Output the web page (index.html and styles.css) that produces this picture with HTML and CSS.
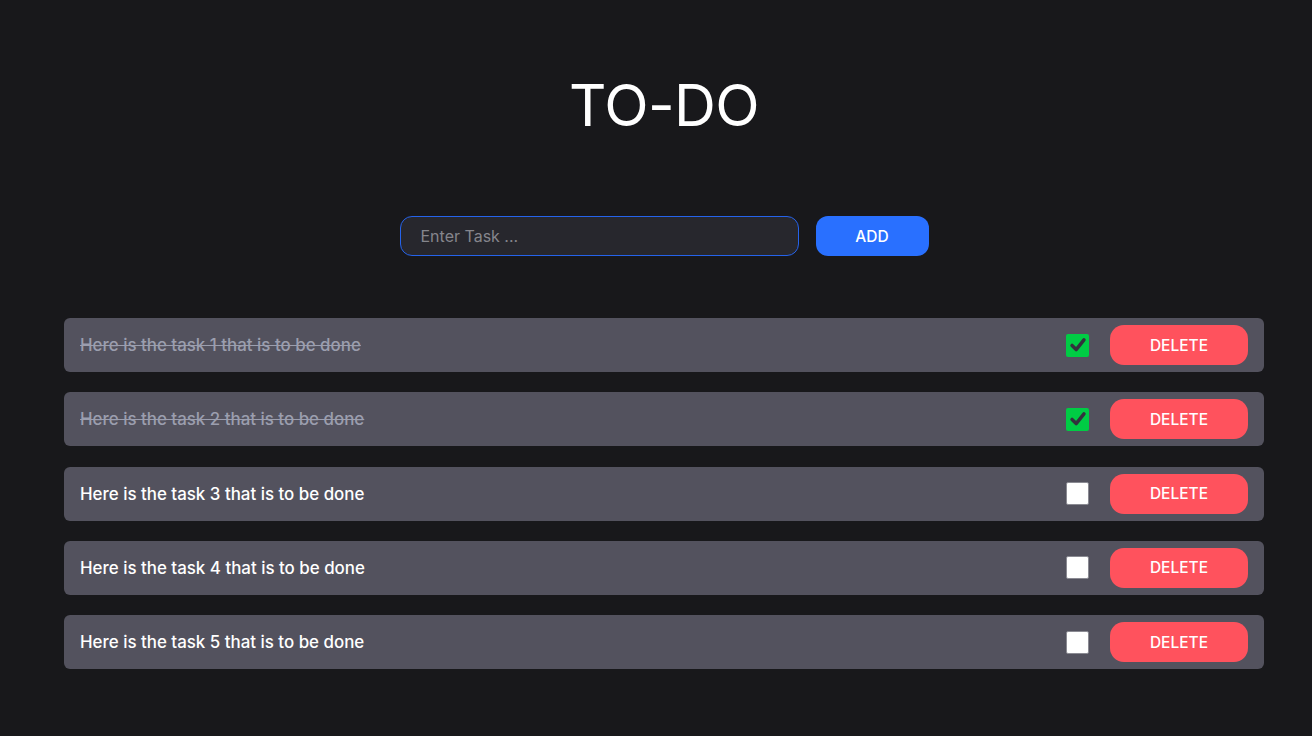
FILE: index.html
```html
<!DOCTYPE html>
<html>
<head>
<meta charset="utf-8">
<title>TO-DO</title>
<link rel="stylesheet" href="styles.css">
</head>
<body>
<main class="app">
  <h1 class="title">TO-DO</h1>
  <form class="add-form">
    <input class="task-input" type="text" placeholder="Enter Task ...">
    <button class="add-btn" type="button">ADD</button>
  </form>
  <ul class="tasks">
    <li class="task done">
      <span class="task-text">Here is the task 1 that is to be done</span>
      <span class="check checked"><svg viewBox="0 0 24 24" width="24" height="24"><path d="M5.5 12.5 L10 17 L18.5 6.5" fill="none" stroke="#33313d" stroke-width="3.8" stroke-linecap="round" stroke-linejoin="round"/></svg></span>
      <button class="del-btn" type="button">DELETE</button>
    </li>
    <li class="task done">
      <span class="task-text">Here is the task 2 that is to be done</span>
      <span class="check checked"><svg viewBox="0 0 24 24" width="24" height="24"><path d="M5.5 12.5 L10 17 L18.5 6.5" fill="none" stroke="#33313d" stroke-width="3.8" stroke-linecap="round" stroke-linejoin="round"/></svg></span>
      <button class="del-btn" type="button">DELETE</button>
    </li>
    <li class="task">
      <span class="task-text">Here is the task 3 that is to be done</span>
      <span class="check"></span>
      <button class="del-btn" type="button">DELETE</button>
    </li>
    <li class="task">
      <span class="task-text">Here is the task 4 that is to be done</span>
      <span class="check"></span>
      <button class="del-btn" type="button">DELETE</button>
    </li>
    <li class="task">
      <span class="task-text">Here is the task 5 that is to be done</span>
      <span class="check"></span>
      <button class="del-btn" type="button">DELETE</button>
    </li>
  </ul>
</main>
</body>
</html>
```
FILE: styles.css
```css
* { box-sizing: border-box; }
html, body {
  margin: 0;
  padding: 0;
  background: #18181b;
  font-family: Inter, "Noto Sans", sans-serif;
  color: #ffffff;
}
body { padding-left: 16px; }
.app {
  width: 1200px;
  margin: 0 auto;
  padding-top: 69px;
  display: flex;
  flex-direction: column;
  align-items: center;
}
.title {
  margin: 0;
  font-size: 58px;
  font-weight: 400;
  line-height: 72px;
  letter-spacing: -0.6px;
}
.add-form {
  margin-top: 75px;
  display: flex;
  gap: 17px;
  align-items: center;
}
.task-input {
  width: 399px;
  height: 40px;
  border: 1px solid #2563eb;
  border-radius: 12px;
  background: #27272d;
  color: #fff;
  padding: 0 20px;
  font-family: inherit;
  font-size: 16px;
  outline: none;
}
.task-input::placeholder { color: #85858c; }
.add-btn {
  width: 113px;
  height: 40px;
  border: none;
  border-radius: 12px;
  background: #2970ff;
  color: #fff;
  font-family: inherit;
  font-size: 15.5px;
  font-weight: 500;
}
.tasks {
  list-style: none;
  margin: 62px 0 0;
  padding: 0;
  width: 1200px;
  display: flex;
  flex-direction: column;
  gap: 20.3px;
}
.task {
  height: 54px;
  background: #53525e;
  border-radius: 6px;
  display: flex;
  align-items: center;
  padding: 0 16px;
}
.task-text {
  flex: 1;
  font-size: 16.9px;
  font-weight: 500;
  color: #fff;
}
.task.done .task-text {
  color: #9b9eae;
  text-decoration: line-through;
}
.check {
  width: 23px;
  height: 23px;
  background: #fff;
  border: 1px solid #8a8a92;
  border-radius: 2px;
  margin-right: 21px;
  display: flex;
  align-items: center;
  justify-content: center;
}
.check.checked {
  background: #00cc44;
  border: none;
}
.check svg { width: 22px; height: 22px; }
.del-btn {
  width: 138px;
  height: 40px;
  border: none;
  border-radius: 14px;
  background: #ff525d;
  color: #fff;
  font-family: inherit;
  font-size: 15.5px;
  font-weight: 500;
}
```
